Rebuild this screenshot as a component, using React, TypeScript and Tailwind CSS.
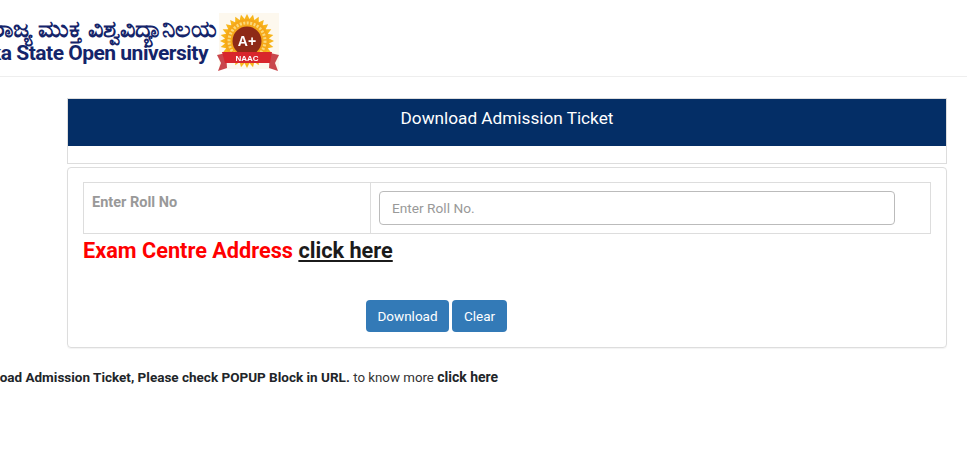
function NaacBadge() {
    const rays = Array.from({ length: 28 }, (_, i) => (i * 360) / 28);
    return (
        <svg width="64" height="60" viewBox="0 0 64 60" className="shrink-0 blur-[0.5px]">
            <rect x="2" y="0" width="60" height="56" fill="#fdf8ee" />
            {rays.map(r => (
                <polygon key={r} points="30,1 33,7 27,7" fill="#f7b51c" transform={`rotate(${r} 30 28)`} />
            ))}
            <circle cx="30" cy="28" r="22" fill="#f6a81a" />
            <circle cx="30" cy="28" r="18" fill="none" stroke="#fbd97a" strokeWidth="3" strokeDasharray="2 1.5" />
            <circle cx="30" cy="28" r="14.5" fill="#8e2a17" />
            <text x="30" y="33" textAnchor="middle" fill="#fff" fontSize="14" fontWeight="700" fontFamily="Liberation Sans, sans-serif">A+</text>
            <polygon points="0,42 9,40 10,55 1,58 4,50" fill="#c9474c" />
            <polygon points="62,42 53,40 52,55 61,58 58,50" fill="#c9474c" />
            <polygon points="5,39 55,39 53,50 8,50" fill="#d8262c" />
            <text x="30" y="48" textAnchor="middle" fill="#fff" fontSize="8" fontWeight="700" fontFamily="Liberation Sans, sans-serif">NAAC</text>
        </svg>
    );
}

export default function App() {
    return (
        <div className="min-h-[449px] bg-white overflow-hidden font-['Roboto',sans-serif] text-[#212529]">
            {/* Header */}
            <header className="h-[77px] border-b border-[#eeeeee] flex items-start">
                <div className="w-[217px] shrink-0 overflow-hidden flex flex-col items-end pt-[14px] text-[#14246a] whitespace-nowrap">
                    <div className="text-[24px] leading-[28px] font-semibold font-['Noto_Sans','DejaVu_Sans',sans-serif]">ರಾಜ್ಯ ಮುಕ್ತ ವಿಶ್ವವಿದ್ಯಾನಿಲಯ</div>
                    <div className="text-[21px] leading-[22px] font-bold pr-[9px] tracking-[-0.5px]">Karnataka State Open university</div>
                </div>
                <div className="pt-[13px]"><NaacBadge /></div>
            </header>

            <main className="pt-[21px] pl-[67px] w-[947px]">
                {/* Title panel */}
                <div className="h-[66px] border border-[#dddddd]">
                    <div className="h-[47px] bg-[#042e66] text-white text-[17.2px] flex items-center justify-center pb-[7px]">
                        Download Admission Ticket
                    </div>
                </div>

                {/* Form panel */}
                <div className="mt-[3px] h-[181px] border border-[#dddddd] rounded-[4px] px-[15px] pt-[14px] shadow-[0_1px_1px_rgba(0,0,0,0.05)]">
                    <div className="flex h-[52px] border border-[#dddddd]">
                        <div className="w-[287px] shrink-0 border-r border-[#dddddd] pl-[8px] pt-[10px] text-[14.5px] font-bold leading-5 text-[#999999]">
                            Enter Roll No
                        </div>
                        <div className="pl-[8px] pt-[8px]">
                            <input
                                placeholder="Enter Roll No."
                                className="block w-[516px] h-[34px] px-[12px] border border-[#bbbbbb] rounded-[4px] text-[13.7px] outline-none placeholder:text-[#999999]"
                            />
                        </div>
                    </div>
                    <div className="mt-[2px] text-[21.7px] leading-[29px] font-bold text-[#ff0000]">
                        Exam Centre Address <a className="text-[#1b1b1b] underline">click here</a>
                    </div>
                    <div className="mt-[35px] pl-[283px] flex gap-[3px] text-[13.5px] text-white">
                        <button className="w-[83px] h-[32px] rounded-[4px] bg-[#337ab7]">Download</button>
                        <button className="w-[55px] h-[32px] rounded-[4px] bg-[#337ab7]">Clear</button>
                    </div>
                </div>
            </main>

            {/* Note */}
            <p className="mt-[19px] -ml-[56px] text-[13.5px] leading-5 whitespace-nowrap">
                <b>To Download Admission Ticket, Please check POPUP Block in URL.</b>{" "}
                <span className="text-[13.3px] text-[#333333]">to know more</span> <b className="text-[14px]">click here</b>
            </p>
        </div>
    );
}
